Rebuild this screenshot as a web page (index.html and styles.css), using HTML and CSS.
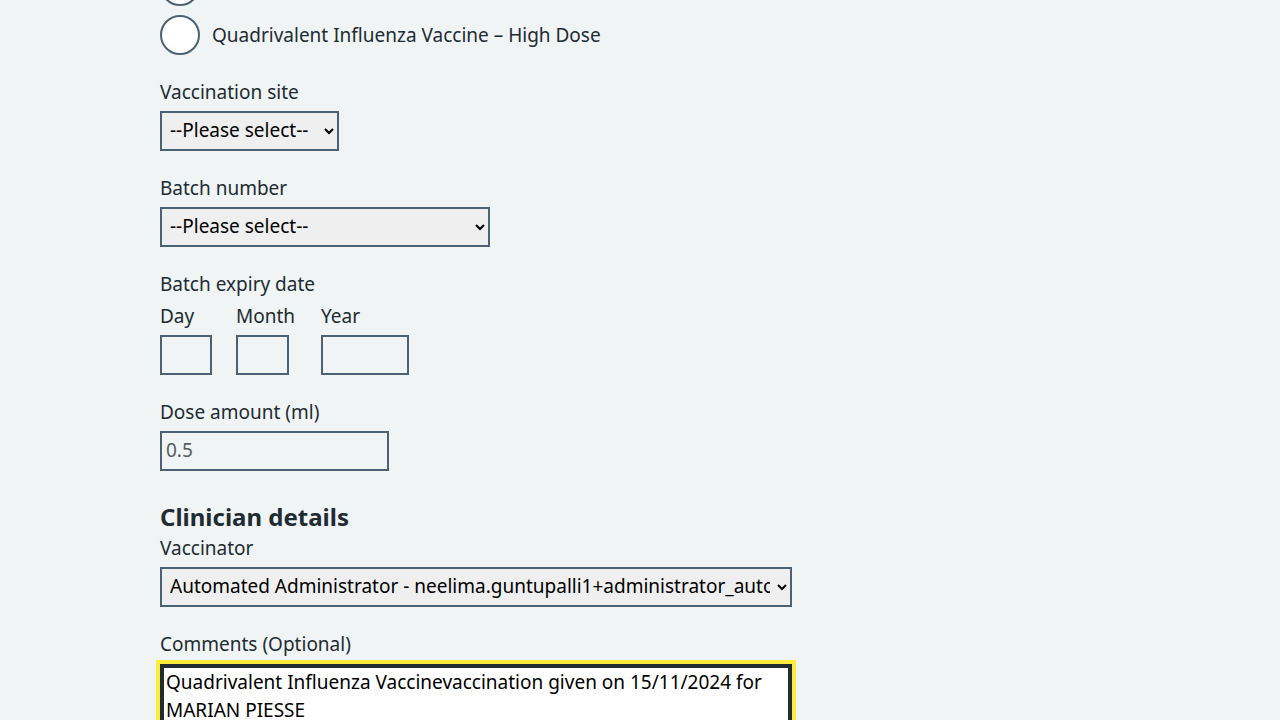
FILE: index.html
```html
<!DOCTYPE html>
<html lang="en">
<head>
<meta charset="utf-8">
<title>Record vaccination</title>
<link rel="stylesheet" href="styles.css">
</head>
<body>
<main class="container">
  <div class="form-group">
    <div class="radios">
      <div class="radio-item">
        <input class="radio-input" type="radio" name="vaccine" id="v1" aria-label="Quadrivalent Influenza Vaccine">
      </div>
      <div class="radio-item">
        <input class="radio-input" type="radio" name="vaccine" id="v2">
        <label class="radio-label" for="v2">Quadrivalent Influenza Vaccine – High Dose</label>
      </div>
    </div>
  </div>

  <div class="form-group">
    <label class="label" for="site">Vaccination site</label>
    <select class="select select-site" id="site"><option>--Please select--</option></select>
  </div>

  <div class="form-group">
    <label class="label" for="batch">Batch number</label>
    <select class="select select-batch" id="batch"><option>--Please select--</option></select>
  </div>

  <fieldset class="form-group fieldset">
    <legend class="label legend">Batch expiry date</legend>
    <div class="date-input">
      <div class="date-item">
        <label class="label" for="d">Day</label>
        <input class="input input-day" id="d" type="text">
      </div>
      <div class="date-item date-item-month">
        <label class="label" for="m">Month</label>
        <input class="input input-month" id="m" type="text">
      </div>
      <div class="date-item">
        <label class="label" for="y">Year</label>
        <input class="input input-year" id="y" type="text">
      </div>
    </div>
  </fieldset>

  <div class="form-group">
    <label class="label" for="dose">Dose amount (ml)</label>
    <input class="input input-dose" id="dose" type="text" value="0.5" readonly>
  </div>

  <h2 class="heading">Clinician details</h2>
  <div class="form-group">
    <label class="label" for="vacc">Vaccinator</label>
    <select class="select select-vaccinator" id="vacc"><option>Automated Administrator - neelima.guntupalli1+administrator_automation@nhs.net</option></select>
  </div>

  <div class="form-group">
    <label class="label" for="comments">Comments (Optional)</label>
    <textarea class="textarea" id="comments" rows="5">Quadrivalent Influenza Vaccinevaccination given on 15/11/2024 for MARIAN PIESSE</textarea>
  </div>
</main>
</body>
</html>
```

FILE: styles.css
```css
* { box-sizing: border-box; }

body {
  margin: 0;
  background: #f0f4f5;
  color: #212b32;
  font-family: "Noto Sans", "Liberation Sans", sans-serif;
  font-size: 19px;
  line-height: 28px;
}

.container {
  width: 960px;
  margin: -34px auto 0;
}

.form-group {
  margin: 0 0 24px;
}

.fieldset {
  border: 0;
  padding: 0;
  min-width: 0;
}

.label {
  display: block;
  margin: 0 0 4px;
  padding: 0;
  position: relative;
  top: -1px;
}

.radios {
  display: flex;
  flex-direction: column;
  gap: 9px;
}

.radio-item {
  display: flex;
  align-items: center;
  height: 40px;
}

.radio-input {
  appearance: none;
  -webkit-appearance: none;
  margin: 0;
  width: 40px;
  height: 40px;
  border: 2px solid #4c6272;
  border-radius: 50%;
  background: #ffffff;
  flex: none;
}

.radio-label {
  padding-left: 12px;
}

.select {
  height: 40px;
  border: 2px solid #4c6272;
  border-radius: 0;
  background-color: #efefef;
  color: #000000;
  font-family: inherit;
  font-size: 19px;
  padding: 0 4px 3px 4px;
}

.select-site { width: 179px; }
.select-batch { width: 330px; }
.select-vaccinator { width: 632px; }

.date-input {
  display: flex;
}

.date-item {
  margin-right: 24px;
}

.date-item-month {
  min-width: 61px;
}

.input {
  display: block;
  height: 40px;
  border: 2px solid #4c6272;
  border-radius: 0;
  background: transparent;
  font-family: inherit;
  font-size: 19px;
  padding: 4px;
  color: #212b32;
}

.input-day { width: 52px; }
.input-month { width: 53px; }
.input-year { width: 88px; }
.input-dose { width: 229px; color: #555d63; padding-bottom: 6px; }

.heading {
  font-size: 24px;
  line-height: 32px;
  font-weight: 700;
  margin: 30px 0 2px;
}

.textarea {
  display: block;
  width: 632px;
  height: 132px;
  border: 2px solid #212b32;
  box-shadow: inset 0 0 0 2px #212b32;
  outline: 4px solid #ffeb3b;
  background: #ffffff;
  color: #000000;
  font-family: inherit;
  font-size: 19px;
  line-height: 28px;
  padding: 2px 4px 4px;
  resize: none;
  margin-top: 5px;
}
```
